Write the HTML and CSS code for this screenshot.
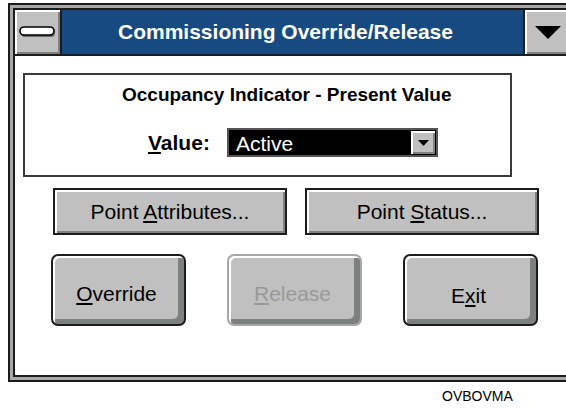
FILE: index.html
```html
<!DOCTYPE html>
<html>
<head>
<meta charset="utf-8">
<link rel="stylesheet" href="styles.css">
</head>
<body>
<div class="window">
  <div class="inner">
    <div class="titlebar">
      <div class="sysbtn">
        <svg width="38" height="12" viewBox="0 0 38 12"><rect x="2" y="3" width="34" height="8" rx="4" fill="#6a6a6a"/><rect x="1" y="1" width="34" height="8" rx="4" fill="#fff" stroke="#000" stroke-width="1.6"/></svg>
      </div>
      <div class="title">Commissioning Override/Release</div>
      <div class="dropbtn">
        <svg width="26" height="13" viewBox="0 0 26 13"><polygon points="0,0 26,0 13,13" fill="#000"/></svg>
      </div>
    </div>
    <div class="content">
      <div class="group">
        <div class="heading">Occupancy Indicator - Present Value</div>
        <div class="valuerow">
          <span class="label"><u>V</u>alue:</span>
          <div class="combo">
            <span class="combotext">Active</span>
            <span class="comboarrow"><svg width="11" height="6" viewBox="0 0 11 6"><polygon points="0,0 11,0 5.5,6" fill="#000"/></svg></span>
          </div>
        </div>
      </div>
      <div class="row1">
        <div class="btn"><span>Point <u>A</u>ttributes...</span></div>
        <div class="btn"><span>Point <u>S</u>tatus...</span></div>
      </div>
      <div class="row2">
        <div class="bigbtn"><span><u>O</u>verride</span></div>
        <div class="bigbtn disabled"><span><u>R</u>elease</span></div>
        <div class="bigbtn exit"><span>E<u>x</u>it</span></div>
      </div>
    </div>
  </div>
</div>
<div class="caption">OVBOVMA</div>
</body>
</html>
```

FILE: styles.css
```css
html, body {
  margin: 0;
  padding: 0;
  background: #fff;
  overflow: hidden;
  width: 566px;
  height: 408px;
}
body {
  font-family: "Liberation Sans", Arial, sans-serif;
  color: #000;
}
.window {
  margin: 3px 0 0 8px;
  width: 559px;
  border: 2px solid #1c1c1c;
  padding: 3px;
  background: #a8a8a8;
}
.inner {
  border: 2px solid #1c1c1c;
  background: #fff;
  height: 365px;
}
.titlebar {
  display: flex;
  height: 44px;
  border-bottom: 2px solid #1c1c1c;
}
.sysbtn, .dropbtn {
  width: 45px;
  background: #c0c0c0;
  box-shadow: inset 2px 2px 0 #fff, inset -2px -2px 0 #808080;
  display: flex;
  align-items: center;
  justify-content: center;
}
.sysbtn {
  border-right: 2px solid #1c1c1c;
}
.dropbtn {
  border-left: 2px solid #1c1c1c;
}
.title {
  flex: 1;
  background: #174a80;
  color: #fff;
  font-weight: bold;
  font-size: 21px;
  display: flex;
  align-items: center;
  justify-content: center;
  padding-right: 14px;
}
.content {
  padding: 17px 0 0 8px;
}
.group {
  width: 485px;
  height: 100px;
  border: 2px solid #3a3a3a;
}
.heading {
  font-weight: bold;
  font-size: 19px;
  line-height: 22px;
  margin-top: 9px;
  padding-left: 97px;
}
.valuerow {
  display: flex;
  align-items: center;
  margin-top: 22px;
  padding-left: 123px;
}
.label {
  font-weight: bold;
  font-size: 21px;
  width: 79px;
}
.combo {
  width: 207px;
  height: 25px;
  border: 2px solid #555;
  background: #000;
  display: flex;
  align-items: center;
  justify-content: space-between;
}
.combotext {
  color: #fff;
  font-size: 21px;
  padding-left: 7px;
  padding-top: 3px;
}
.comboarrow {
  width: 24px;
  height: 23px;
  margin-right: 1px;
  background: #c0c0c0;
  box-shadow: inset 2px 2px 0 #fff, inset -2px -2px 0 #808080;
  display: flex;
  align-items: center;
  justify-content: center;
}
.row1 {
  display: flex;
  gap: 18px;
  margin-top: 11px;
  padding-left: 30px;
}
.btn {
  width: 230px;
  height: 43px;
  border: 2px solid #1c1c1c;
  background: #c0c0c0;
  box-shadow: inset 2px 2px 0 #fff, inset -2px -2px 0 #808080;
  font-size: 21px;
  display: flex;
  align-items: center;
  justify-content: center;
}
.row2 {
  display: flex;
  justify-content: space-between;
  width: 487px;
  margin-top: 19px;
  padding-left: 28px;
}
.bigbtn {
  width: 127px;
  height: 60px;
  padding: 8px 4px 0 0;
  border: 2px solid #1c1c1c;
  border-radius: 7px;
  background: #c0c0c0;
  box-shadow: inset 2px 2px 0 #fff, inset -6px -5px 0 #7c8080;
  font-size: 21px;
  display: flex;
  align-items: center;
  justify-content: center;
}
.bigbtn.exit {
  padding-top: 12px;
  height: 56px;
}
.bigbtn.disabled {
  border-color: #a8a8a8;
  color: #999;
}
.caption {
  margin: 6px 0 0 442px;
  font-size: 14px;
}
```
